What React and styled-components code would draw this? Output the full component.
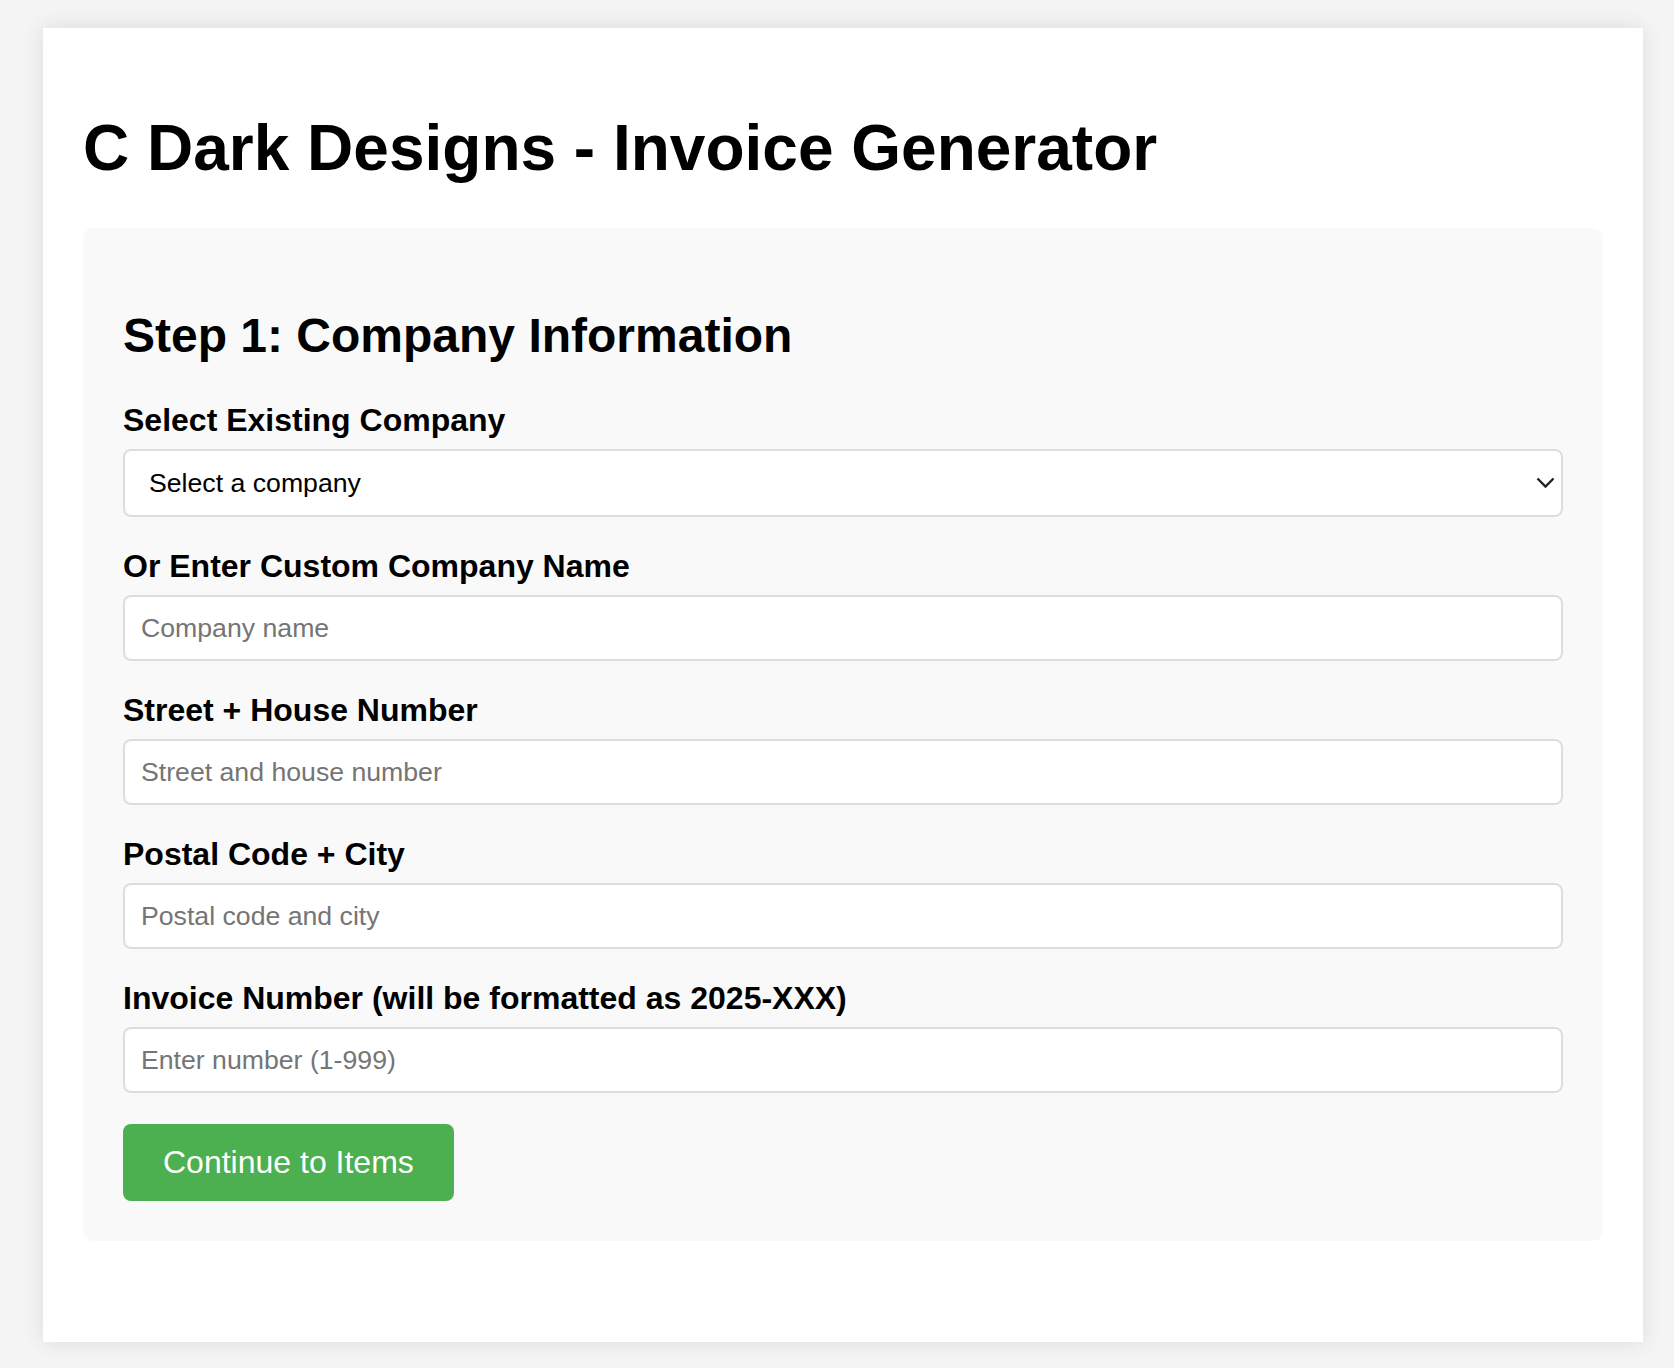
import React from 'react';
import styled, { createGlobalStyle } from 'styled-components';

const GlobalStyle = createGlobalStyle`
  * {
    box-sizing: border-box;
  }

  body {
    margin: 0;
    background: #f4f4f4;
    font-family: "Liberation Sans", Arial, sans-serif;
    color: #000;
  }
`;

const Page = styled('div')`
  padding: 28px 31px 26px 43px;
`;

const Container = styled('div')`
  width: 1600px;
  background: #fff;
  padding: 40px;
  box-shadow: 0 0 20px rgba(0, 0, 0, 0.1);
`;

const Title = styled('h1')`
  font-size: 64px;
  font-weight: bold;
  line-height: normal;
  margin: 43px 0;
`;

const Panel = styled('section')`
  background: #f9f9f9;
  border-radius: 10px;
  padding: 40px;
  margin-bottom: 61px;
`;

const StepTitle = styled('h2')`
  font-size: 48px;
  font-weight: bold;
  line-height: normal;
  margin: 40px 0 39px;
`;

const Group = styled('div')`
  margin-bottom: 31px;
`;

const Label = styled('label')`
  display: block;
  font-size: 32px;
  font-weight: bold;
  line-height: normal;
  margin-bottom: 10px;
`;

const SelectWrap = styled('div')`
  position: relative;
`;

const Select = styled('select')`
  display: block;
  width: 100%;
  height: 68px;
  padding: 0 24px;
  appearance: none;
  background: #fff;
  border: 2px solid #ddd;
  border-radius: 8px;
  font-family: "Liberation Sans", Arial, sans-serif;
  font-size: 26.67px;
  color: #000;
`;

const Chevron = styled('svg')`
  position: absolute;
  right: 8px;
  top: 50%;
  transform: translateY(-50%);
  pointer-events: none;
`;

const Input = styled('input')`
  display: block;
  width: 100%;
  height: 66px;
  padding: 0 16px;
  background: #fff;
  border: 2px solid #ddd;
  border-radius: 8px;
  font-family: "Liberation Sans", Arial, sans-serif;
  font-size: 26.67px;
  color: #000;

  &::placeholder {
    color: #757575;
  }
`;

const Button = styled('button')`
  display: inline-block;
  padding: 20px 40px;
  background: #4caf50;
  color: #fff;
  border: none;
  border-radius: 8px;
  font-family: "Liberation Sans", Arial, sans-serif;
  font-size: 32px;
  line-height: normal;
  cursor: pointer;
`;

const fields = [
  { label: 'Or Enter Custom Company Name', placeholder: 'Company name' },
  { label: 'Street + House Number', placeholder: 'Street and house number' },
  { label: 'Postal Code + City', placeholder: 'Postal code and city' },
  { label: 'Invoice Number (will be formatted as 2025-XXX)', placeholder: 'Enter number (1-999)' },
];

export default function App() {
  return (
    <>
      <GlobalStyle />
      <Page>
        <Container>
          <Title>C Dark Designs - Invoice Generator</Title>
          <Panel>
            <StepTitle>Step 1: Company Information</StepTitle>
            <Group>
              <Label>Select Existing Company</Label>
              <SelectWrap>
                <Select defaultValue="">
                  <option value="">Select a company</option>
                </Select>
                <Chevron width="19" height="12" viewBox="0 0 19 12">
                  <path d="M1.5 1.5 L9.5 9.5 L17.5 1.5" fill="none" stroke="#222" strokeWidth="2.4" />
                </Chevron>
              </SelectWrap>
            </Group>
            {fields.map((f) => (
              <Group key={f.label}>
                <Label>{f.label}</Label>
                <Input type="text" placeholder={f.placeholder} />
              </Group>
            ))}
            <Button>Continue to Items</Button>
          </Panel>
        </Container>
      </Page>
    </>
  );
}
